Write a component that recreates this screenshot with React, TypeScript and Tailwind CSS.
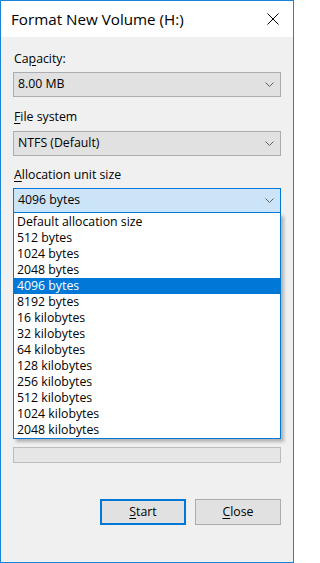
import type { ReactNode } from "react";

const sizes = [
  "Default allocation size",
  "512 bytes",
  "1024 bytes",
  "2048 bytes",
  "4096 bytes",
  "8192 bytes",
  "16 kilobytes",
  "32 kilobytes",
  "64 kilobytes",
  "128 kilobytes",
  "256 kilobytes",
  "512 kilobytes",
  "1024 kilobytes",
  "2048 kilobytes",
];

function Chevron() {
  return (
    <svg width="9" height="5" viewBox="0 0 9 5" fill="none" stroke="#606060" strokeWidth={1}>
      <path d="M0.5 0.5L4.5 4.5L8.5 0.5" />
    </svg>
  );
}

// Label with an underlined accelerator letter, like Win32 dialogs
function Label({ before, hot, after }: { before?: string; hot: string; after: string }) {
  return (
    <div className="h-[16px] pl-[1px] leading-[16px]">
      {before}
      <span className="underline underline-offset-[2px]">{hot}</span>
      {after}
    </div>
  );
}

function Combo({ value, focused, className }: { value: string; focused?: boolean; className?: string }) {
  return (
    <div
      className={`flex h-[25px] items-center justify-between border pl-[4px] pr-[6px] ${
        focused ? "border-[#0078d7] bg-[#cce4f7]" : "border-[#adadad] bg-[#e1e1e1]"
      } ${className ?? ""}`}
    >
      <span>{value}</span>
      <Chevron />
    </div>
  );
}

function Button({ children, primary }: { children: ReactNode; primary?: boolean }) {
  return (
    <button
      className={`flex h-[26px] w-[86px] items-center justify-center bg-[#e1e1e1] ${
        primary ? "border-2 border-[#0078d7]" : "border border-[#adadad]"
      }`}
    >
      {children}
    </button>
  );
}

export default function App() {
  return (
    <div className="flex h-[563px] w-[294px] flex-col border border-[#1883d7] bg-[#f0f0f0] font-['Open_Sans','Noto_Sans',sans-serif] text-[12.3px] text-black">
      {/* Title bar */}
      <div className="flex h-[36px] items-center justify-between bg-white pl-[10px] pr-[14px]">
        <span className="text-[15.2px]">Format New Volume (H:)</span>
        <svg width="12" height="12" viewBox="0 0 12 12" stroke="#000" strokeWidth={1}>
          <path d="M0.5 0.5L11.5 11.5M11.5 0.5L0.5 11.5" />
        </svg>
      </div>

      <div className="flex flex-1 flex-col px-[12px] pt-[14px]">
        <Label before="Ca" hot="p" after="acity:" />
        <Combo value="8.00 MB" className="mt-[5px]" />

        <div className="mt-[12px]">
          <Label hot="F" after="ile system" />
        </div>
        <Combo value="NTFS (Default)" className="mt-[6px]" />

        <div className="mt-[11px]">
          <Label hot="A" after="llocation unit size" />
        </div>
        <Combo value="4096 bytes" focused className="mt-[5px]" />

        {/* Open dropdown list */}
        <div className="border-x border-b border-[#0078d7] bg-white pt-[1px] shadow-[3px_3px_3px_rgba(0,0,0,0.25)]">
          {sizes.map((s) => (
            <div
              key={s}
              className={`h-[16px] pl-[3px] leading-[16px] ${
                s === "4096 bytes" ? "bg-[#0078d7] text-white" : ""
              }`}
            >
              {s}
            </div>
          ))}
        </div>

        {/* Progress bar */}
        <div className="mt-[8px] h-[16px] border border-[#bcbcbc] bg-[#e6e6e6]" />

        <div className="mt-[36px] flex justify-end gap-[9px]">
          <Button primary>
            <span className="underline underline-offset-[2px]">S</span>tart
          </Button>
          <Button>
            <span className="underline underline-offset-[2px]">C</span>lose
          </Button>
        </div>
      </div>
    </div>
  );
}
